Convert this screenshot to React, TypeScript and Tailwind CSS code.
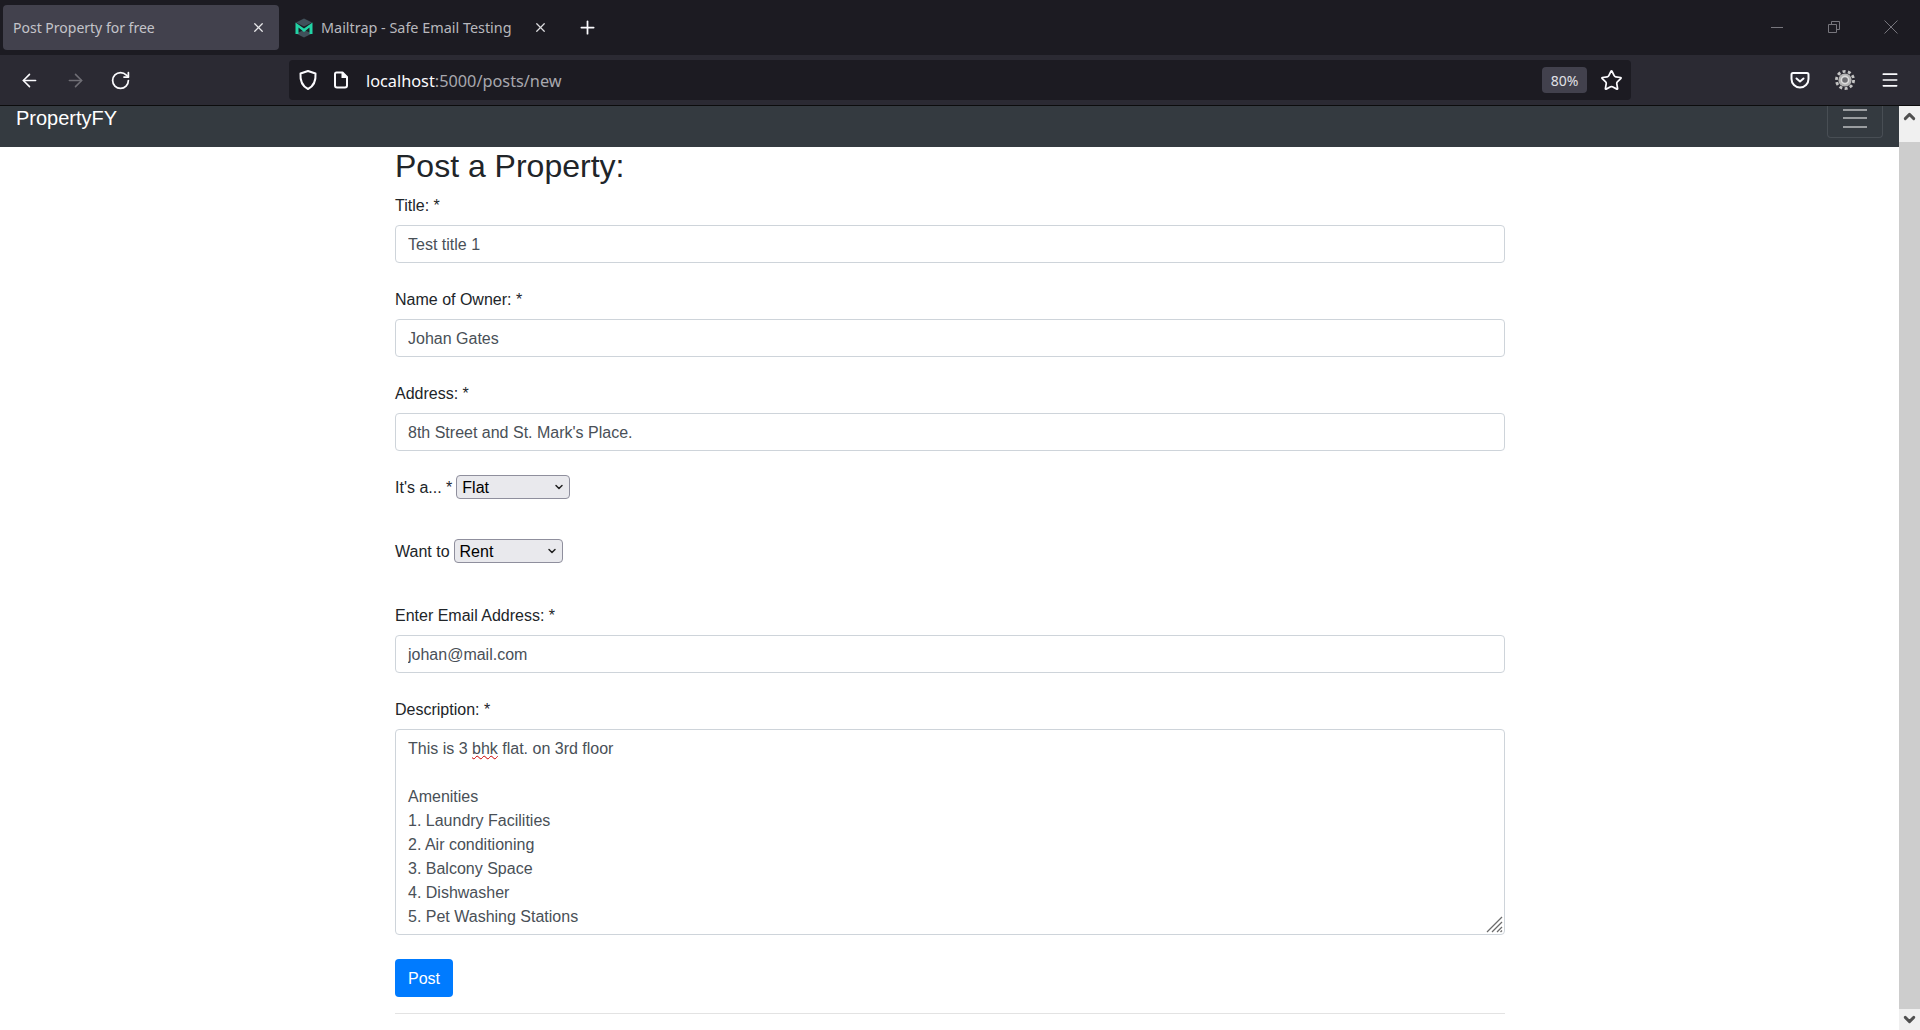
import { X, Plus, ArrowLeft, ArrowRight, RotateCw, Star, Menu, ChevronUp, ChevronDown } from "lucide-react";

const chrome = "font-['Noto_Sans',sans-serif]";

function Field({ label, value }: { label: string; value: string }) {
  return (
    <div className="mb-[24px]">
      <label className="block h-[24px] mb-[8px] leading-[26px]">{label}</label>
      <input
        readOnly
        value={value}
        className="block w-full h-[38px] px-[12px] pt-[1px] text-[16px] text-[#495057] bg-white border border-[#ced4da] rounded-[4px] outline-none"
      />
    </div>
  );
}

function Dropdown({ value, width }: { value: string; width: string }) {
  return (
    <span className={`relative inline-flex h-[24px] ml-[4px] align-middle ${width}`}>
      <select className="appearance-none w-full h-full pl-[5px] pt-[1px] text-[16px] leading-[20px] text-black bg-[#e9e9ed] border border-[#8f8f9d] rounded-[4px] outline-none">
        <option>{value}</option>
      </select>
      <ChevronDown size={12} strokeWidth={3} className="absolute right-[5px] top-[6px] text-[#222] pointer-events-none" />
    </span>
  );
}

function ShieldIcon() {
  return (
    <svg width="20" height="22" viewBox="0 0 20 22" fill="none" stroke="#fbfbfe" strokeWidth="2">
      <path d="M10 2 L17.5 4.5 C18 11 16 17 10 20 C4 17 2 11 2.5 4.5 Z" strokeLinejoin="round" />
    </svg>
  );
}

function PageIcon() {
  return (
    <svg width="16" height="18" viewBox="0 0 16 18" fill="none" stroke="#fbfbfe" strokeWidth="2">
      <path d="M3.5 1.5 H9.5 L14 6 V14.5 A2 2 0 0 1 12 16.5 H4 A2 2 0 0 1 2 14.5 V3 A1.5 1.5 0 0 1 3.5 1.5 Z" strokeLinejoin="round" />
      <path d="M9.5 1.5 V6 H14" fill="#fbfbfe" />
    </svg>
  );
}

function MailtrapIcon() {
  return (
    <svg width="20" height="20" viewBox="0 0 20 20" fill="none">
      <path d="M10 0.5 L18 4.5 L10 8.5 L2 4.5 Z" fill="#40505a" />
      <path d="M10 19.5 L18 15.5 L10 12 L2 15.5 Z" fill="#40505a" />
      <path d="M1.5 16 V4.5 L10 10.5 L18.5 4.5 V16 H15.5 V9.5 L10 14 L4.5 9.5 V16 Z" fill="#22d3a5" />
    </svg>
  );
}

function PocketIcon() {
  return (
    <svg width="20" height="18" viewBox="0 0 20 18" fill="none" stroke="#fbfbfe" strokeWidth="2" strokeLinecap="round" strokeLinejoin="round">
      <path d="M3 2 H17 A1.5 1.5 0 0 1 18.5 3.5 V8 A8.5 8.5 0 0 1 1.5 8 V3.5 A1.5 1.5 0 0 1 3 2 Z" />
      <path d="M6.5 7.5 L10 10.5 L13.5 7.5" />
    </svg>
  );
}

function GearIcon() {
  return (
    <svg width="20" height="20" viewBox="0 0 20 20">
      <circle cx="10" cy="10" r="8.6" fill="none" stroke="#c4c4c4" strokeWidth="2.8" strokeDasharray="3 2.4" />
      <circle cx="10" cy="10" r="6.6" fill="#b4b4b4" />
      <circle cx="10" cy="10" r="4.4" fill="#dcdcdc" />
      <circle cx="10" cy="10" r="2.8" fill="#6e6e72" />
    </svg>
  );
}

function ResizeHandle() {
  return (
    <svg width="18" height="18" viewBox="0 0 18 18" className="absolute right-[1px] bottom-[1px]" stroke="#6b6b6b" strokeWidth="1.2">
      <path d="M2 17 L17 2" />
      <path d="M7 17 L17 7" />
      <path d="M12 17 L17 12" />
      <path d="M15.5 17 L17 15.5" />
    </svg>
  );
}

export default function App() {
  return (
    <div className="h-[1030px] w-[1920px] overflow-hidden flex flex-col bg-white font-['Liberation_Sans',Arial,sans-serif] text-[16px] text-[#212529]">
      {/* tab strip */}
      <div className={`h-[55px] shrink-0 bg-[#1c1b22] flex items-start ${chrome}`}>
        <div className="mt-[5px] ml-[3px] w-[276px] h-[45px] rounded-[4px] bg-[#42414d] flex items-center pl-[10px] pr-[13px] text-[14px] text-[#c4c4ca]">
          <span className="flex-1">Post Property for free</span>
          <X size={15} className="text-[#e8e8ea]" />
        </div>
        <div className="h-[55px] flex items-center ml-[15px] text-[14.4px] text-[#b8b8bd]">
          <MailtrapIcon />
          <span className="ml-[7px]">Mailtrap - Safe Email Testing</span>
          <X size={15} className="ml-[21px] text-[#dcdcdf]" />
          <Plus size={21} className="ml-[29px] text-[#fbfbfe]" />
        </div>
        <div className="ml-auto h-[53px] flex items-center gap-[43px] pr-[22px] text-[#77767d]">
          <svg width="14" height="14" viewBox="0 0 14 14" fill="none" stroke="currentColor">
            <path d="M1 7.5 H13" />
          </svg>
          <svg width="14" height="14" viewBox="0 0 14 14" fill="none" stroke="currentColor">
            <path d="M1.5 4.5 H9.5 V12.5 H1.5 Z" />
            <path d="M4.5 4.5 V1.5 H12.5 V9.5 H9.5" />
          </svg>
          <svg width="14" height="14" viewBox="0 0 14 14" fill="none" stroke="currentColor">
            <path d="M0.5 0.5 L13.5 13.5 M13.5 0.5 L0.5 13.5" />
          </svg>
        </div>
      </div>

      {/* toolbar */}
      <div className={`h-[51px] shrink-0 bg-[#2b2a33] border-b border-[#0c0c0d] flex items-center ${chrome}`}>
        <ArrowLeft size={21} strokeWidth={1.8} className="ml-[19px] text-[#fbfbfe]" />
        <ArrowRight size={21} strokeWidth={1.8} className="ml-[25px] text-[#6f6e75]" />
        <RotateCw size={21} strokeWidth={2} className="ml-[24px] text-[#fbfbfe]" />
        <div className="ml-[158px] w-[1342px] h-[40px] rounded-[4px] bg-[#1c1b22] flex items-center pl-[9px] pr-[8px]">
          <ShieldIcon />
          <span className="ml-[15px] flex"><PageIcon /></span>
          <span className="ml-[17px] pt-[2px] text-[16.3px] text-[#fbfbfe]">
            localhost<span className="text-[#a8a8ae]">:5000/posts/new</span>
          </span>
          <span className="ml-auto w-[45px] h-[26px] rounded-[4px] bg-[#42414d] text-[14px] text-[#e0e0e6] flex items-center justify-center">80%</span>
          <Star size={23} strokeWidth={1.8} className="ml-[13px] text-[#fbfbfe]" />
        </div>
        <div className="ml-auto flex items-center gap-[25px] pr-[20px]">
          <PocketIcon />
          <GearIcon />
          <Menu size={20} strokeWidth={2} className="text-[#fbfbfe]" />
        </div>
      </div>

      <div className="flex-1 min-h-0 flex">
        <div className="flex-1 min-w-0 flex flex-col">
          {/* navbar */}
          <nav className="h-[41px] shrink-0 bg-[#343a40] flex items-start justify-between pl-[16px] pr-[16px]">
            <a className="text-[20px] leading-[25px] text-white">PropertyFY</a>
            <button className="w-[56px] h-[32px] pb-[7px] border border-[#484e54] border-t-0 rounded-b-[4px] flex flex-col items-center justify-center gap-[6.5px]">
              <span className="block w-[24px] h-[2px] bg-[#9a9da0]" />
              <span className="block w-[24px] h-[2px] bg-[#9a9da0]" />
              <span className="block w-[24px] h-[2px] bg-[#9a9da0]" />
            </button>
          </nav>

          {/* form */}
          <main className="w-[1110px] ml-[395px]">
            <h2 className="text-[32px] leading-[38px] mb-[8px]">Post a Property:</h2>
            <Field label="Title: *" value="Test title 1" />
            <Field label="Name of Owner: *" value="Johan Gates" />
            <Field label="Address: *" value="8th Street and St. Mark's Place." />
            <div className="h-[24px] mb-[40px] flex items-center">
              <span className="pt-[1px]">It's a... *</span>
              <Dropdown value="Flat" width="w-[114px]" />
            </div>
            <div className="h-[24px] mb-[40px] flex items-center">
              <span className="pt-[1px]">Want to</span>
              <Dropdown value="Rent" width="w-[109px]" />
            </div>
            <Field label="Enter Email Address: *" value="johan@mail.com" />
            <div className="mb-[24px]">
              <label className="block h-[24px] mb-[8px] leading-[26px]">Description: *</label>
              <div className="relative h-[206px] px-[12px] pt-[7px] pb-[5px] text-[#495057] leading-[24px] border border-[#ced4da] rounded-[4px]">
                <p>This is 3 <span className="underline decoration-wavy decoration-[#c00] decoration-1">bhk</span> flat. on 3rd floor</p>
                <p>&nbsp;</p>
                <p>Amenities</p>
                <p>1. Laundry Facilities</p>
                <p>2. Air conditioning</p>
                <p>3. Balcony Space</p>
                <p>4. Dishwasher</p>
                <p>5. Pet Washing Stations</p>
                <ResizeHandle />
              </div>
            </div>
            <button className="block w-[58px] h-[38px] pt-[1px] rounded-[4px] bg-[#007bff] text-white text-[16px]">Post</button>
            <hr className="mt-[16px] border-t border-[#e3e3e3]" />
          </main>
        </div>

        {/* scrollbar */}
        <div className="w-[21px] shrink-0 bg-[#f0f0f0] flex flex-col">
          <div className="h-[36px] shrink-0 flex justify-center pt-[2px]">
            <ChevronUp size={17} strokeWidth={4} className="text-[#505050]" />
          </div>
          <div className="flex-1 bg-[#cdcdcd]" />
          <div className="h-[21px] shrink-0 flex items-center justify-center">
            <ChevronDown size={17} strokeWidth={4} className="text-[#505050]" />
          </div>
        </div>
      </div>
    </div>
  );
}
